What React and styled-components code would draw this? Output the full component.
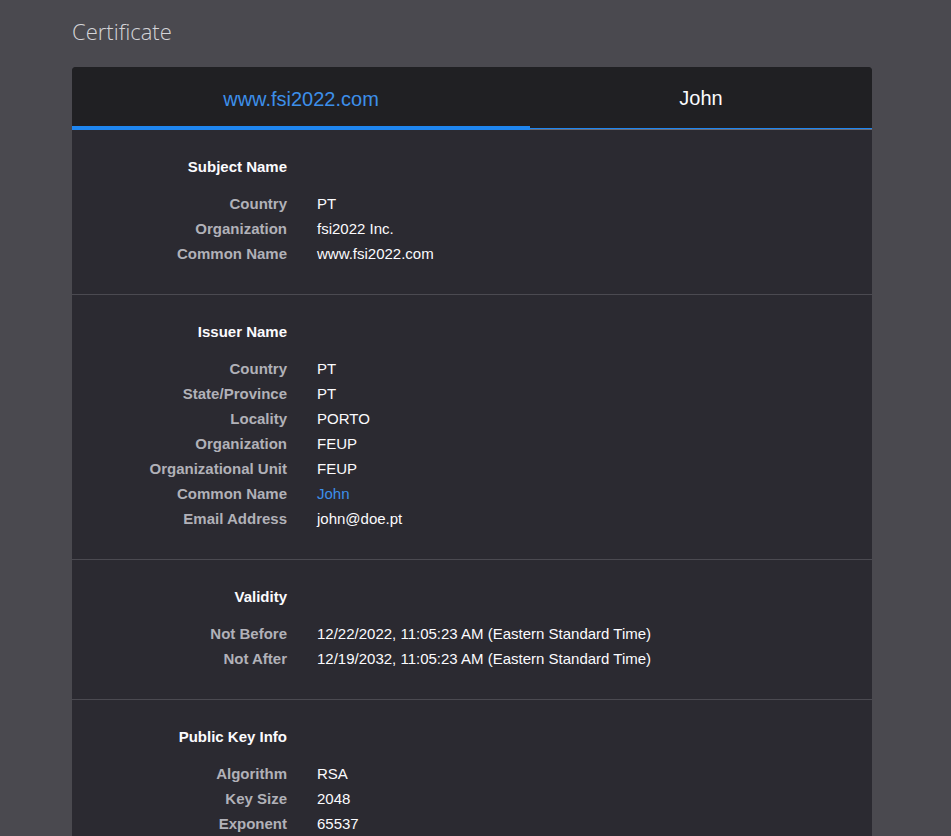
import React from 'react';
import styled, { createGlobalStyle } from 'styled-components';

const GlobalStyle = createGlobalStyle`
  html, body {
    margin: 0;
    padding: 0;
    background-color: #4a494f;
  }
  body {
    font-family: "Liberation Sans", Arial, sans-serif;
    color: #fbfbfe;
  }
`

const Page = styled.div`
  padding: 0 79px 0 72px;
  height: 836px;
  overflow: hidden;
`

const Title = styled.h1`
  margin: 0;
  padding-top: 17px;
  height: 67px;
  box-sizing: border-box;
  font-family: "Open Sans", sans-serif;
  font-weight: 300;
  font-size: 22px;
  line-height: 28px;
  color: #d4d4d8;
`

const Card = styled.div`
  width: 800px;
  border-radius: 4px;
  overflow: hidden;
  background-color: #2b2a31;
`

const TabBar = styled.div`
  display: flex;
  background-color: #202023;
  border-bottom: 1px solid #6b6b73;
`

const Tab = styled.div`
  width: ${p => p.$width}px;
  height: ${p => (p.$active ? 63 : 62)}px;
  margin-bottom: ${p => (p.$active ? -1 : 0)}px;
  box-sizing: border-box;
  display: flex;
  justify-content: center;
  align-items: center;
  padding-top: ${p => (p.$active ? 5 : 2)}px;
  font-size: 20px;
  color: ${p => (p.$active ? '#3d8fe9' : '#fbfbfe')};
  border-bottom: ${p => (p.$active ? '4px solid #1f86f0' : '1px solid #1f86f0')};
`

const Section = styled.section`
  padding: 24px 0 28px;
  border-bottom: 1px solid #4b4a51;
`

const Grid = styled.div`
  display: grid;
  grid-template-columns: 215px 1fr;
  column-gap: 30px;
  font-size: 15px;
  line-height: 25px;
`

const Heading = styled.div`
  grid-column: 1;
  text-align: right;
  font-weight: bold;
  color: #fbfbfe;
  margin-bottom: 12px;
`

const Label = styled.div`
  text-align: right;
  font-weight: bold;
  color: #b1b1b8;
  white-space: nowrap;
`

const Value = styled.div`
  color: ${p => (p.$link ? '#3d8fe9' : '#fbfbfe')};
  white-space: nowrap;
`

const sections = [
  {
    title: 'Subject Name',
    rows: [
      ['Country', 'PT'],
      ['Organization', 'fsi2022 Inc.'],
      ['Common Name', 'www.fsi2022.com'],
    ],
  },
  {
    title: 'Issuer Name',
    rows: [
      ['Country', 'PT'],
      ['State/Province', 'PT'],
      ['Locality', 'PORTO'],
      ['Organization', 'FEUP'],
      ['Organizational Unit', 'FEUP'],
      ['Common Name', 'John', true],
      ['Email Address', 'john@doe.pt'],
    ],
  },
  {
    title: 'Validity',
    rows: [
      ['Not Before', '12/22/2022, 11:05:23 AM (Eastern Standard Time)'],
      ['Not After', '12/19/2032, 11:05:23 AM (Eastern Standard Time)'],
    ],
  },
  {
    title: 'Public Key Info',
    rows: [
      ['Algorithm', 'RSA'],
      ['Key Size', '2048'],
      ['Exponent', '65537'],
    ],
  },
];

export default function App() {
  return (
    <>
      <GlobalStyle />
      <Page>
        <Title>Certificate</Title>
        <Card>
          <TabBar>
            <Tab $width={458} $active>www.fsi2022.com</Tab>
            <Tab $width={342}>John</Tab>
          </TabBar>
          {sections.map(s => (
            <Section key={s.title}>
              <Grid>
                <Heading>{s.title}</Heading>
                <div />
                {s.rows.map(([label, value, link]) => (
                  <React.Fragment key={label}>
                    <Label>{label}</Label>
                    <Value $link={link}>{value}</Value>
                  </React.Fragment>
                ))}
              </Grid>
            </Section>
          ))}
        </Card>
      </Page>
    </>
  );
}
